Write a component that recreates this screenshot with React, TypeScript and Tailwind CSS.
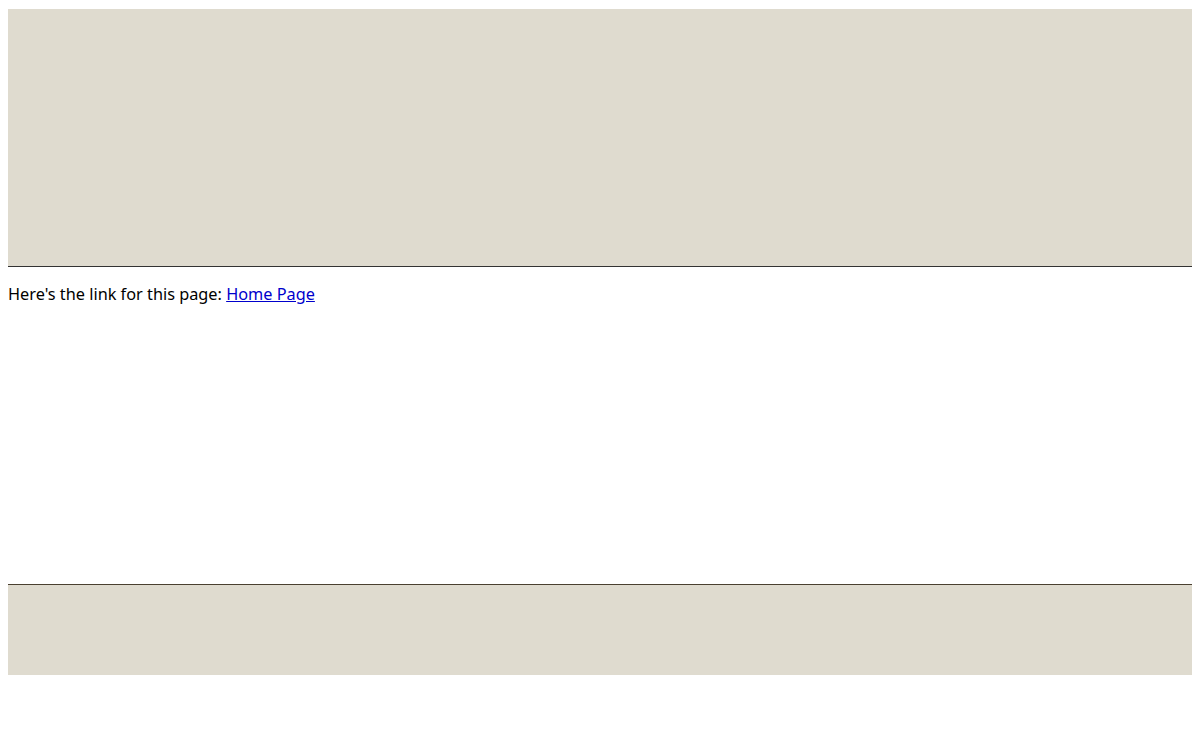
export default function App() {
  return (
    <div className="min-h-[740px] bg-white px-2 pt-[9px]" style={{ fontFamily: '"Noto Sans", "Open Sans", sans-serif' }}>
      <header className="h-[258px] border-b border-[#333333] bg-[#dfdbcf]" />
      <main className="h-[317px] pt-[15px]">
        <p className="text-[16.3px] leading-[24px] text-black">
          Here's the link for this page:{" "}
          <a href="#" className="text-[#0000cc] underline">
            Home Page
          </a>
        </p>
      </main>
      <footer className="h-[91px] border-t border-[#4a4030] bg-[#dfdbcf]" />
    </div>
  );
}
